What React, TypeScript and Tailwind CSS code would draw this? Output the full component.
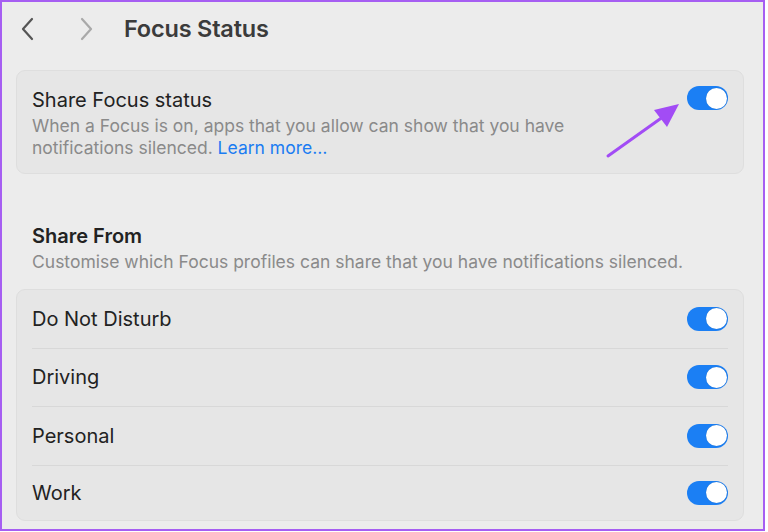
// Focus Status settings pane (macOS System Settings style)
import React from 'react';

const font = { fontFamily: 'Inter, "Noto Sans", "Liberation Sans", sans-serif' };

function Toggle() {
  return (
    <div className="w-[41px] h-[24px] rounded-full bg-[#1b7ff4] flex items-center justify-end px-[1.5px] shrink-0">
      <div className="w-[21px] h-[21px] rounded-full bg-white shadow-[0_0_1px_rgba(0,0,0,0.25)]" />
    </div>
  );
}

const profiles = ['Do Not Disturb', 'Driving', 'Personal', 'Work'];

export default function App() {
  return (
    <div className="w-[768px] h-[532px] bg-white" style={font}>
      <div className="relative w-[765px] h-[531px] border-2 border-[#a65ef2] bg-[#ececec] overflow-hidden">
        {/* Toolbar */}
        <div className="flex items-center h-[54px] pl-[17px]">
          <svg width="18" height="24" viewBox="0 0 18 24" className="mr-[40px]">
            <path d="M13 2 L4 12 L13 22" fill="none" stroke="#555" strokeWidth="2.2" strokeLinecap="round" strokeLinejoin="round" />
          </svg>
          <svg width="18" height="24" viewBox="0 0 18 24" className="mr-[29px]">
            <path d="M5 2 L14 12 L5 22" fill="none" stroke="#a9a9a9" strokeWidth="2.2" strokeLinecap="round" strokeLinejoin="round" />
          </svg>
          <h1 className="text-[23.5px] font-semibold text-[#3b3b3b] tracking-[-0.2px]">Focus Status</h1>
        </div>

        <div className="pl-[14px] pr-[19px] pt-[14px]">
          {/* Share Focus status card */}
          <div className="rounded-[9px] bg-[#e6e6e6] border border-[#dedede] h-[104px] pl-[15px] pr-[15px] flex items-start justify-between">
            <div className="pt-[16px]">
              <div className="text-[20px] text-[#222] leading-[26px]">Share Focus status</div>
              <div className="text-[17.5px] text-[#8a8a8a] leading-[22px] mt-[2px]">
                When a Focus is on, apps that you allow can show that you have
                <br />
                notifications silenced. <span className="text-[#1a7cf2]">Learn more…</span>
              </div>
            </div>
            <div className="pt-[15px]">
              <Toggle />
            </div>
          </div>

          {/* Share From section */}
          <div className="pl-[16px] pt-[49px] pb-[16px]">
            <div className="text-[20px] font-semibold text-[#222] leading-[26px]">Share From</div>
            <div className="text-[17.5px] text-[#8a8a8a] leading-[22px] mt-[2px]">
              Customise which Focus profiles can share that you have notifications silenced.
            </div>
          </div>

          <div className="rounded-[9px] bg-[#e6e6e6] border border-[#dedede] h-[232px] px-[15px] flex flex-col">
            {profiles.map((p, i) => (
              <div
                key={p}
                className={
                  i < profiles.length - 1
                    ? 'h-[58.5px] shrink-0 flex items-center justify-between border-b border-[#d8d8d8]'
                    : 'flex-1 flex items-center justify-between'
                }
              >
                <span className="text-[20px] text-[#222]">{p}</span>
                <Toggle />
              </div>
            ))}
          </div>
        </div>

        {/* Annotation arrow */}
        <svg className="absolute left-0 top-0 pointer-events-none" width="765" height="531" viewBox="0 0 765 531">
          <line x1="606" y1="154" x2="665" y2="112" stroke="#a24cf5" strokeWidth="3" strokeLinecap="round" />
          <polygon points="677,102 652,108 665,125" fill="#a24cf5" />
        </svg>
      </div>
    </div>
  );
}
